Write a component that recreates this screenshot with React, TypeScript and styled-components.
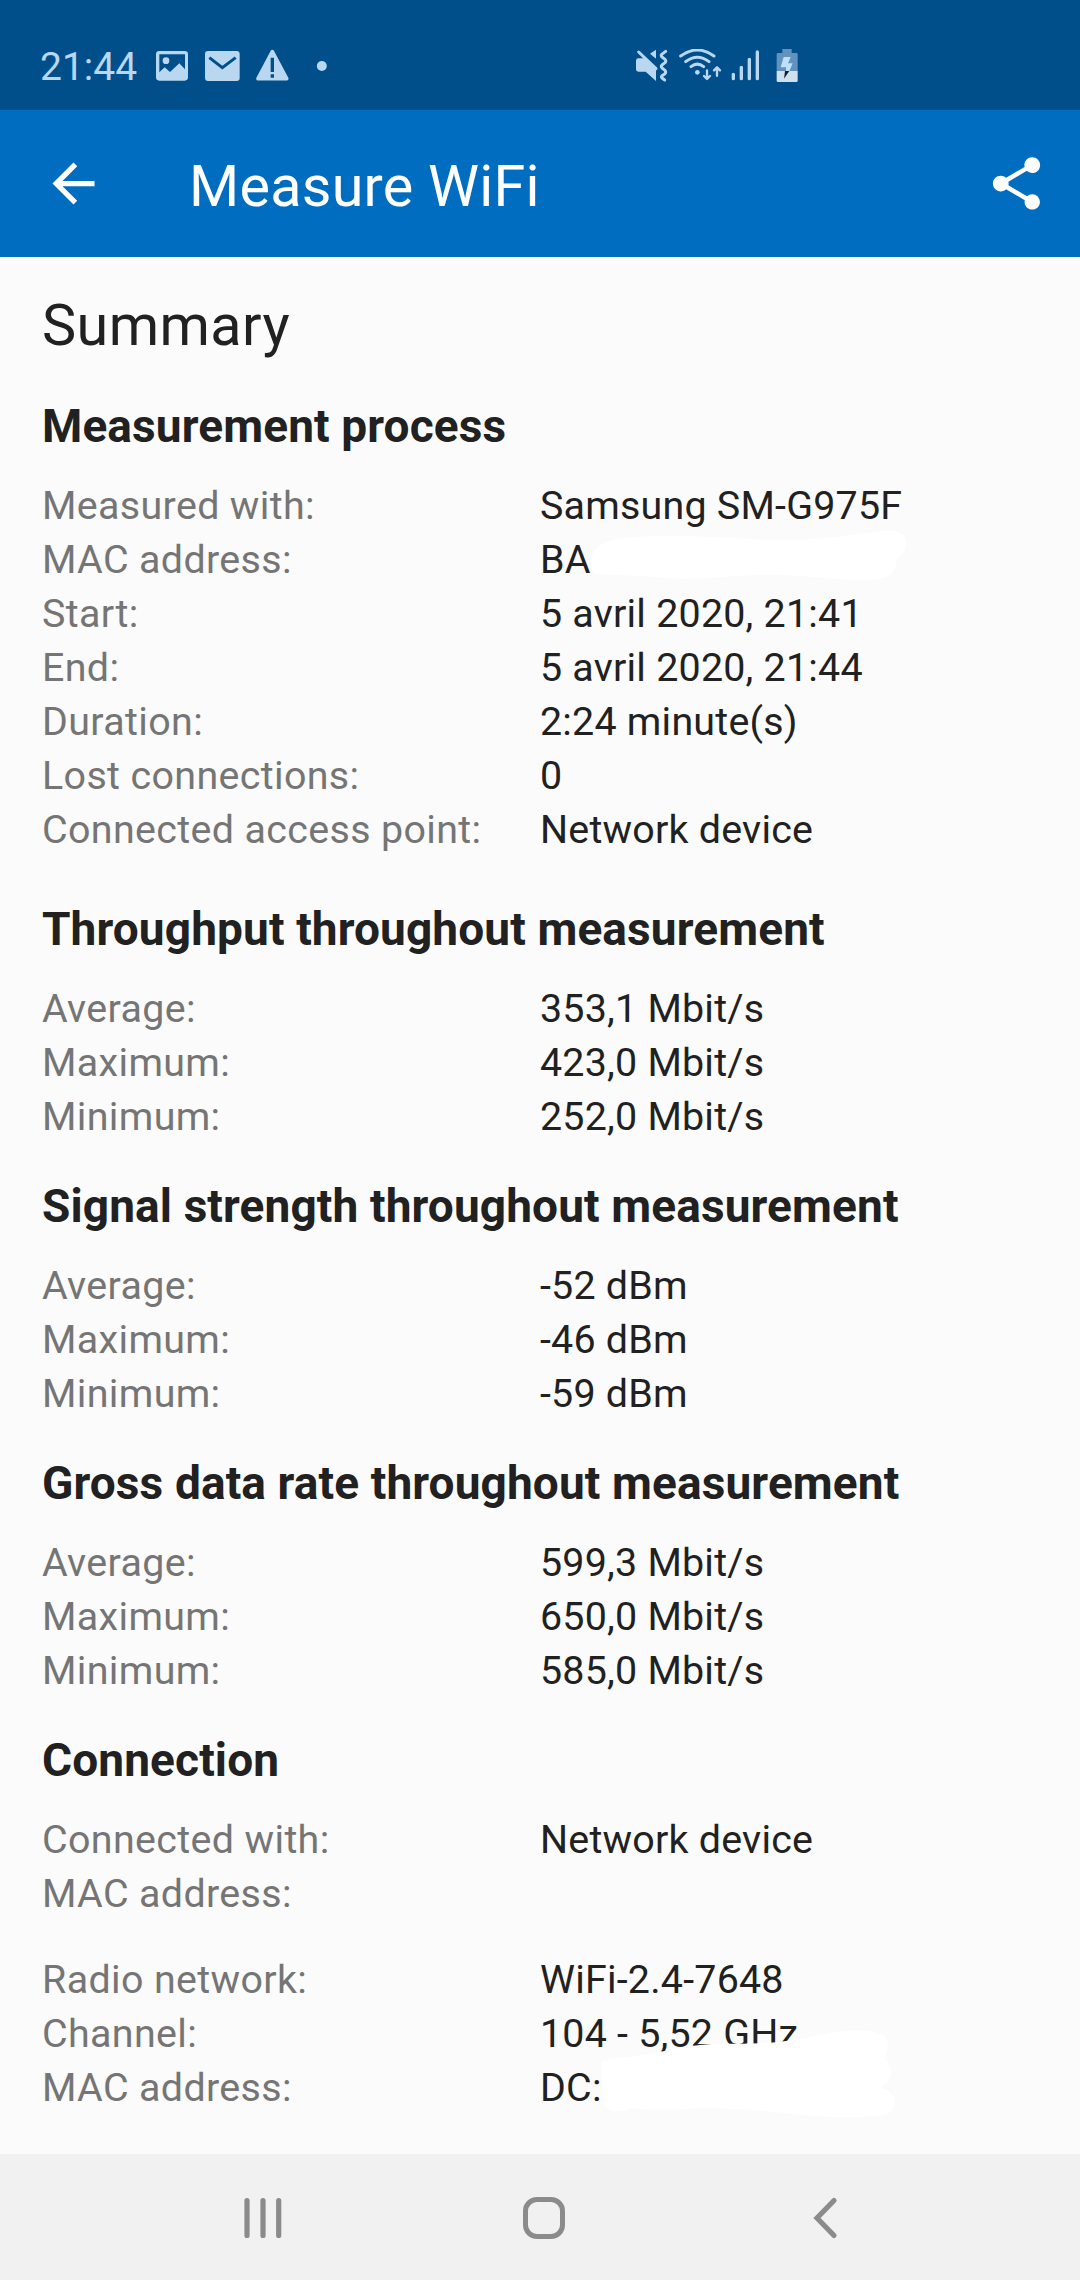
import React from "react";
import styled, { createGlobalStyle } from "styled-components";

const GlobalStyle = createGlobalStyle`
  * { box-sizing: border-box; }
  body { margin: 0; background: #fbfbfb; }
`;

const Screen = styled.div`
  width: 1080px;
  height: 2280px;
  display: flex;
  flex-direction: column;
  overflow: hidden;
  background: #fbfbfb;
  color: #212121;
  font-family: Roboto, "Noto Sans", sans-serif;
`;

const StatusBar = styled.header`
  height: 110px;
  flex: none;
  display: flex;
  align-items: flex-start;
  padding: 49px 0 0 40px;
  background: #004f8b;
  color: #b9d7f0;
`;

const Clock = styled.span`
  width: 116px;
  font-size: 39px;
  line-height: 36px;
`;

const StatusGroup = styled.div<{ $width?: number }>`
  display: flex;
  width: ${(p) => (p.$width ? `${p.$width}px` : "auto")};
`;

const StatusIcon = styled.svg<{ $gap?: number }>`
  flex: none;
  display: block;
  margin-right: ${(p) => p.$gap ?? 0}px;
`;

const AppBar = styled.div`
  height: 147px;
  flex: none;
  display: flex;
  align-items: center;
  padding: 0 32px 0 42px;
  background: #006dc0;
  color: #fff;
`;

const AppTitle = styled.h1`
  flex: 1;
  margin: 6px 0 0 84px;
  font-size: 57.5px;
  font-weight: 400;
  letter-spacing: 0.25px;
  line-height: 68px;
`;

const IconButton = styled.button`
  display: flex;
  padding: 0;
  border: 0;
  background: none;
  color: inherit;
`;

const Content = styled.main`
  flex: 1;
  padding: 35px 42px 0;
`;

const PageTitle = styled.h2`
  margin: 0 0 40px;
  font-size: 57.5px;
  font-weight: 400;
  letter-spacing: 0.42px;
  line-height: 68px;
`;

const Section = styled.section<{ $gap?: number }>`
  margin-bottom: ${(p) => p.$gap ?? 36}px;
`;

const SectionTitle = styled.h3`
  margin: 0 0 27px;
  font-size: 46px;
  font-weight: 700;
  letter-spacing: 0.12px;
  line-height: 52px;
`;

const Table = styled.dl<{ $spaced?: boolean }>`
  margin: ${(p) => (p.$spaced ? 32 : 0)}px 0 0;
`;

const Row = styled.div`
  display: grid;
  grid-template-columns: 498px 1fr;
  height: 54px;
  font-size: 39.4px;
  line-height: 54px;
  white-space: nowrap;
`;

const Label = styled.dt`
  color: #757575;
  letter-spacing: 0.36px;
`;

const Value = styled.dd`
  position: relative;
  margin: 0;
  letter-spacing: 0.22px;
`;

const Smudge = styled.svg`
  position: absolute;
  left: -20px;
  display: block;
  fill: #fff;
`;

const TopSmudge = styled(Smudge)`
  top: -73px;
`;

const BottomSmudge = styled(Smudge)`
  top: -131px;
`;

const NavBar = styled.nav`
  height: 126px;
  flex: none;
  display: flex;
  align-items: center;
  justify-content: space-between;
  padding: 2px 238px 0 239px;
  background: #f1f1f1;
  color: #8b8b8b;
`;

type Item = { label: string; value?: string; cover?: "top" | "bottom" };
type Group = { title: string; gap?: number; tables: Item[][] };

const stats = (avg: string, max: string, min: string): Item[] => [
  { label: "Average:", value: avg },
  { label: "Maximum:", value: max },
  { label: "Minimum:", value: min },
];

const groups: Group[] = [
  {
    title: "Measurement process",
    gap: 46,
    tables: [
      [
        { label: "Measured with:", value: "Samsung SM-G975F" },
        { label: "MAC address:", value: "BA", cover: "top" },
        { label: "Start:", value: "5 avril 2020, 21:41" },
        { label: "End:", value: "5 avril 2020, 21:44" },
        { label: "Duration:", value: "2:24 minute(s)" },
        { label: "Lost connections:", value: "0" },
        { label: "Connected access point:", value: "Network device" },
      ],
    ],
  },
  {
    title: "Throughput throughout measurement",
    tables: [stats("353,1 Mbit/s", "423,0 Mbit/s", "252,0 Mbit/s")],
  },
  {
    title: "Signal strength throughout measurement",
    tables: [stats("-52 dBm", "-46 dBm", "-59 dBm")],
  },
  {
    title: "Gross data rate throughout measurement",
    tables: [stats("599,3 Mbit/s", "650,0 Mbit/s", "585,0 Mbit/s")],
  },
  {
    title: "Connection",
    tables: [
      [{ label: "Connected with:", value: "Network device" }, { label: "MAC address:" }],
      [
        { label: "Radio network:", value: "WiFi-2.4-7648" },
        { label: "Channel:", value: "104 - 5,52 GHz" },
        { label: "MAC address:", value: "DC:", cover: "bottom" },
      ],
    ],
  },
];

function Cover({ kind }: { kind: "top" | "bottom" }) {
  if (kind === "top") {
    return (
      <TopSmudge width="420" height="260" viewBox="0 0 1260 780">
        <path d="M214 300C216 270 240 246 300 236C400 222 560 228 700 238C820 248 950 232 1060 216C1110 208 1155 210 1157 244C1159 272 1148 284 1130 296C1130 334 1110 356 1060 359C960 365 880 344 740 344C640 344 560 362 440 354C360 346 290 346 230 342C214 334 213 318 214 300Z" />
      </TopSmudge>
    );
  }
  return (
    <BottomSmudge width="420" height="240" viewBox="0 0 1260 720">
      <path d="M244 400C252 384 300 386 360 376C420 366 460 358 515 348C580 336 650 344 720 340C790 336 850 326 900 314C970 300 1040 296 1085 312C1108 324 1108 360 1092 388C1114 398 1120 430 1104 452C1100 462 1084 468 1080 474C1104 476 1124 492 1124 518C1124 542 1104 556 1080 556C1000 566 880 562 800 550C720 540 640 536 560 534C480 538 400 542 335 534C320 546 270 548 254 528C246 500 244 430 244 400Z" />
    </BottomSmudge>
  );
}

function StatusIcons() {
  return (
    <>
      <StatusGroup $width={480}>
        <StatusIcon width="32" height="34" viewBox="468 147 96 102" $gap={17}>
          <path
            fill="currentColor"
            fillRule="evenodd"
            d="M478 153H554Q564 153 564 163V232Q564 242 554 242H478Q468 242 468 232V163Q468 153 478 153ZM478 163V217L494 202L510 216L538 190L555 208V163Z"
          />
          <circle cx="498" cy="182" r="10" fill="currentColor" />
        </StatusIcon>
        <StatusIcon width="35" height="34" viewBox="614 147 105 102" $gap={16}>
          <rect x="614" y="153" width="104" height="90" rx="9" fill="currentColor" />
          <path d="M627 173L666 203L706 173" fill="none" stroke="#004f8b" strokeWidth="9" />
        </StatusIcon>
        <StatusIcon width="33" height="34" viewBox="767 147 99 102" $gap={27}>
          <path d="M816 155L859 236H773Z" fill="currentColor" stroke="currentColor" strokeWidth="11" strokeLinejoin="round" />
          <path d="M811 173H821V216H811ZM811 223H821V233H811Z" fill="#004f8b" />
        </StatusIcon>
        <StatusIcon width="12" height="34" viewBox="948 147 36 102">
          <circle cx="965.5" cy="198" r="15" fill="currentColor" />
        </StatusIcon>
      </StatusGroup>
      <StatusGroup>
        <StatusIcon width="33" height="36" viewBox="105 87 99 108" $gap={10}>
          <path d="M112 115H131L165 145V183L134 155H112Q105 155 105 148V122Q105 115 112 115Z" fill="currentColor" />
          <path d="M113 96L165 146" stroke="currentColor" strokeWidth="9" strokeLinecap="round" />
          <path d="M165 89V116L147 101Z" fill="currentColor" />
          <path
            d="M194 94L182 103Q179 107 183 111L193 119Q196 124 192 128L183 135Q179 140 183 144L192 151Q196 156 192 161L183 167Q180 171 183 174L191 180"
            fill="none"
            stroke="currentColor"
            strokeWidth="9"
            strokeLinecap="round"
            strokeLinejoin="round"
          />
        </StatusIcon>
        <StatusIcon width="43" height="36" viewBox="234 87 129 108" $gap={9}>
          <g fill="none" stroke="currentColor" strokeWidth="9" strokeLinecap="round" strokeLinejoin="round">
            <path d="M239 108Q289 72 339 108M254 125Q289 98 324 125M270 140Q289 125 308 140" />
            <path d="M318 151V177M309 168L318 177L327 168M348 167V142M339 151L348 142L357 151" strokeWidth="7" />
          </g>
          <circle cx="289" cy="157" r="7" fill="currentColor" />
        </StatusIcon>
        <StatusIcon width="29" height="36" viewBox="394 87 87 108" $gap={15}>
          <path
            d="M401 163V176M425 142V176M449 118V176M473 96V176"
            stroke="currentColor"
            strokeWidth="10"
            strokeLinecap="round"
          />
        </StatusIcon>
        <StatusIcon width="24" height="36" viewBox="523 87 72 108">
          <path d="M545 87H573V99H587Q591 99 591 103V153H528V103Q528 99 532 99H545Z" fill="#6393bc" />
          <path d="M528 153H591V182Q591 186 587 186H532Q528 186 528 182Z" fill="#cfe1ef" />
          <path d="M549 111H570L562 130H576L566 153H556V142H540Z" fill="#bfe0fa" />
          <path d="M553 153H566L550 176Z" fill="#16202b" />
        </StatusIcon>
      </StatusGroup>
    </>
  );
}

export default function App() {
  return (
    <Screen>
      <GlobalStyle />
      <StatusBar>
        <Clock>21:44</Clock>
        <StatusIcons />
      </StatusBar>
      <AppBar>
        <IconButton aria-label="Back">
          <svg width="63" height="63" viewBox="0 0 24 24" fill="currentColor">
            <path d="M20 11H7.83l5.59-5.59L12 4l-8 8 8 8 1.41-1.41L7.83 13H20v-2z" />
          </svg>
        </IconButton>
        <AppTitle>Measure WiFi</AppTitle>
        <IconButton aria-label="Share">
          <svg width="63" height="63" viewBox="0 0 24 24" fill="currentColor">
            <path d="M18 16.08c-.76 0-1.44.3-1.96.77L8.91 12.7c.05-.23.09-.46.09-.7s-.04-.47-.09-.7l7.05-4.11c.54.5 1.25.81 2.04.81 1.66 0 3-1.34 3-3s-1.34-3-3-3-3 1.34-3 3c0 .24.04.47.09.7L8.04 9.81C7.5 9.31 6.79 9 6 9c-1.66 0-3 1.34-3 3s1.34 3 3 3c.79 0 1.5-.31 2.04-.81l7.12 4.16c-.05.21-.08.43-.08.65 0 1.61 1.31 2.92 2.92 2.92s2.92-1.31 2.92-2.92-1.31-2.92-2.92-2.92z" />
          </svg>
        </IconButton>
      </AppBar>
      <Content>
        <PageTitle>Summary</PageTitle>
        {groups.map((group) => (
          <Section key={group.title} $gap={group.gap}>
            <SectionTitle>{group.title}</SectionTitle>
            {group.tables.map((items, i) => (
              <Table key={i} $spaced={i > 0}>
                {items.map((item) => (
                  <Row key={item.label}>
                    <Label>{item.label}</Label>
                    <Value>
                      {item.value}
                      {item.cover && <Cover kind={item.cover} />}
                    </Value>
                  </Row>
                ))}
              </Table>
            ))}
          </Section>
        ))}
      </Content>
      <NavBar>
        <svg width="48" height="48" viewBox="0 0 48 48" stroke="currentColor" strokeWidth="5.2" strokeLinecap="round">
          <path d="M8 6.5V41.5M24 6.5V41.5M39.7 6.5V41.5" />
        </svg>
        <svg width="48" height="48" viewBox="-3 0 48 48" fill="none" stroke="currentColor" strokeWidth="5">
          <rect x="5.5" y="5.5" width="37" height="37" rx="11.5" />
        </svg>
        <svg width="48" height="48" viewBox="0 0 48 48" fill="none" stroke="currentColor" strokeWidth="5.2" strokeLinecap="round">
          <path d="M40 6.5L23 24L40 41.5" />
        </svg>
      </NavBar>
    </Screen>
  );
}
